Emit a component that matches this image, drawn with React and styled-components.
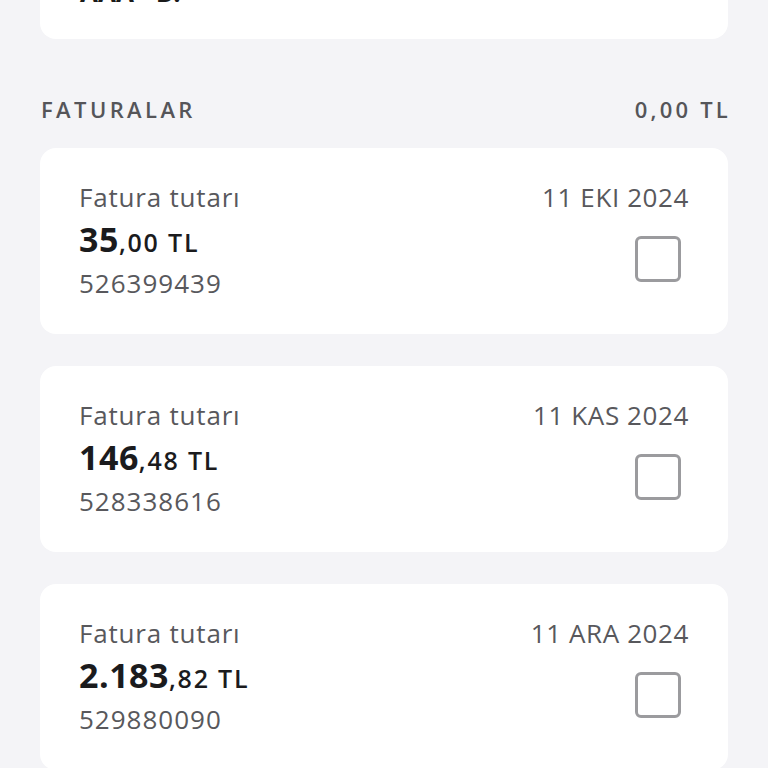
import React from 'react';
import styled, { createGlobalStyle } from 'styled-components';

const GlobalStyle = createGlobalStyle`
  html, body {
    margin: 0;
    padding: 0;
    background: #f4f4f7;
    font-family: "Open Sans", Lato, sans-serif;
    -webkit-font-smoothing: antialiased;
  }
`;

const invoices = [
  { whole: '35', decimal: ',00 TL', number: '526399439', date: '11 EKI 2024' },
  { whole: '146', decimal: ',48 TL', number: '528338616', date: '11 KAS 2024' },
  { whole: '2.183', decimal: ',82 TL', number: '529880090', date: '11 ARA 2024' },
];

const App = () => (
  <>
    <GlobalStyle />
    <Page>
      <TopCard>
        <TopCardText>AAA - B.</TopCardText>
      </TopCard>

      <SectionHeader>
        <SectionTitle>FATURALAR</SectionTitle>
        <SectionTotal>0,00 TL</SectionTotal>
      </SectionHeader>

      <InvoiceList>
        {invoices.map(inv => (
          <InvoiceCard key={inv.number}>
            <InvoiceInfo>
              <Label>Fatura tutarı</Label>
              <Amount>
                <AmountWhole>{inv.whole}</AmountWhole>
                <AmountDecimal>{inv.decimal}</AmountDecimal>
              </Amount>
              <InvoiceNumber>{inv.number}</InvoiceNumber>
            </InvoiceInfo>
            <InvoiceSide>
              <DateText>{inv.date}</DateText>
              <Checkbox type="button" aria-label="Seç" />
            </InvoiceSide>
          </InvoiceCard>
        ))}
      </InvoiceList>
    </Page>
  </>
);

const Page = styled.div`
  padding: 0 40px;
  height: 768px;
  overflow: hidden;
`;

const TopCard = styled.div`
  margin-top: -90px;
  height: 129px;
  background: #fff;
  border-radius: 16px;
  display: flex;
  align-items: flex-end;
  padding: 0 40px 34px;
  box-sizing: border-box;
`;

const TopCardText = styled.div`
  font-size: 26px;
  font-weight: 700;
  color: #1a1a1a;
  line-height: 1;
`;

const SectionHeader = styled.div`
  display: flex;
  justify-content: space-between;
  align-items: center;
  height: 40px;
  margin: 50px 0 19px;
  padding-left: 1px;
  color: #555559;
  font-size: 22px;
  font-weight: 600;
  letter-spacing: 3.4px;
`;

const SectionTitle = styled.span``;

const SectionTotal = styled.span`
  letter-spacing: 3.2px;
  margin-right: -3px;
`;

const InvoiceList = styled.div`
  display: flex;
  flex-direction: column;
  gap: 32px;
`;

const InvoiceCard = styled.div`
  background: #fff;
  border-radius: 16px;
  padding: 32px 39px 34px 39px;
  display: flex;
  justify-content: space-between;
  align-items: flex-start;
`;

const InvoiceInfo = styled.div`
  display: flex;
  flex-direction: column;
`;

const Label = styled.div`
  font-size: 26px;
  line-height: 34px;
  letter-spacing: 0.8px;
  color: #58585c;
`;

const Amount = styled.div`
  margin-top: 5px;
  line-height: 40px;
  color: #1b1b1d;
  display: flex;
  align-items: baseline;
`;

const AmountWhole = styled.span`
  font-size: 34px;
  font-weight: 700;
  letter-spacing: 0.5px;
`;

const AmountDecimal = styled.span`
  font-size: 25px;
  font-weight: 600;
  letter-spacing: 1.8px;
`;

const InvoiceNumber = styled.div`
  margin-top: 4px;
  font-size: 26px;
  line-height: 34px;
  letter-spacing: 1px;
  color: #58585c;
`;

const InvoiceSide = styled.div`
  display: flex;
  flex-direction: column;
  align-items: flex-end;
`;

const DateText = styled.div`
  font-size: 26px;
  line-height: 34px;
  letter-spacing: 0.6px;
  color: #58585c;
`;

const Checkbox = styled.button`
  margin-top: 22px;
  margin-right: 8px;
  width: 46px;
  height: 46px;
  padding: 0;
  background: #fff;
  border: 3px solid #9b9b9e;
  border-radius: 6px;
  box-sizing: border-box;
`;

export default App;
